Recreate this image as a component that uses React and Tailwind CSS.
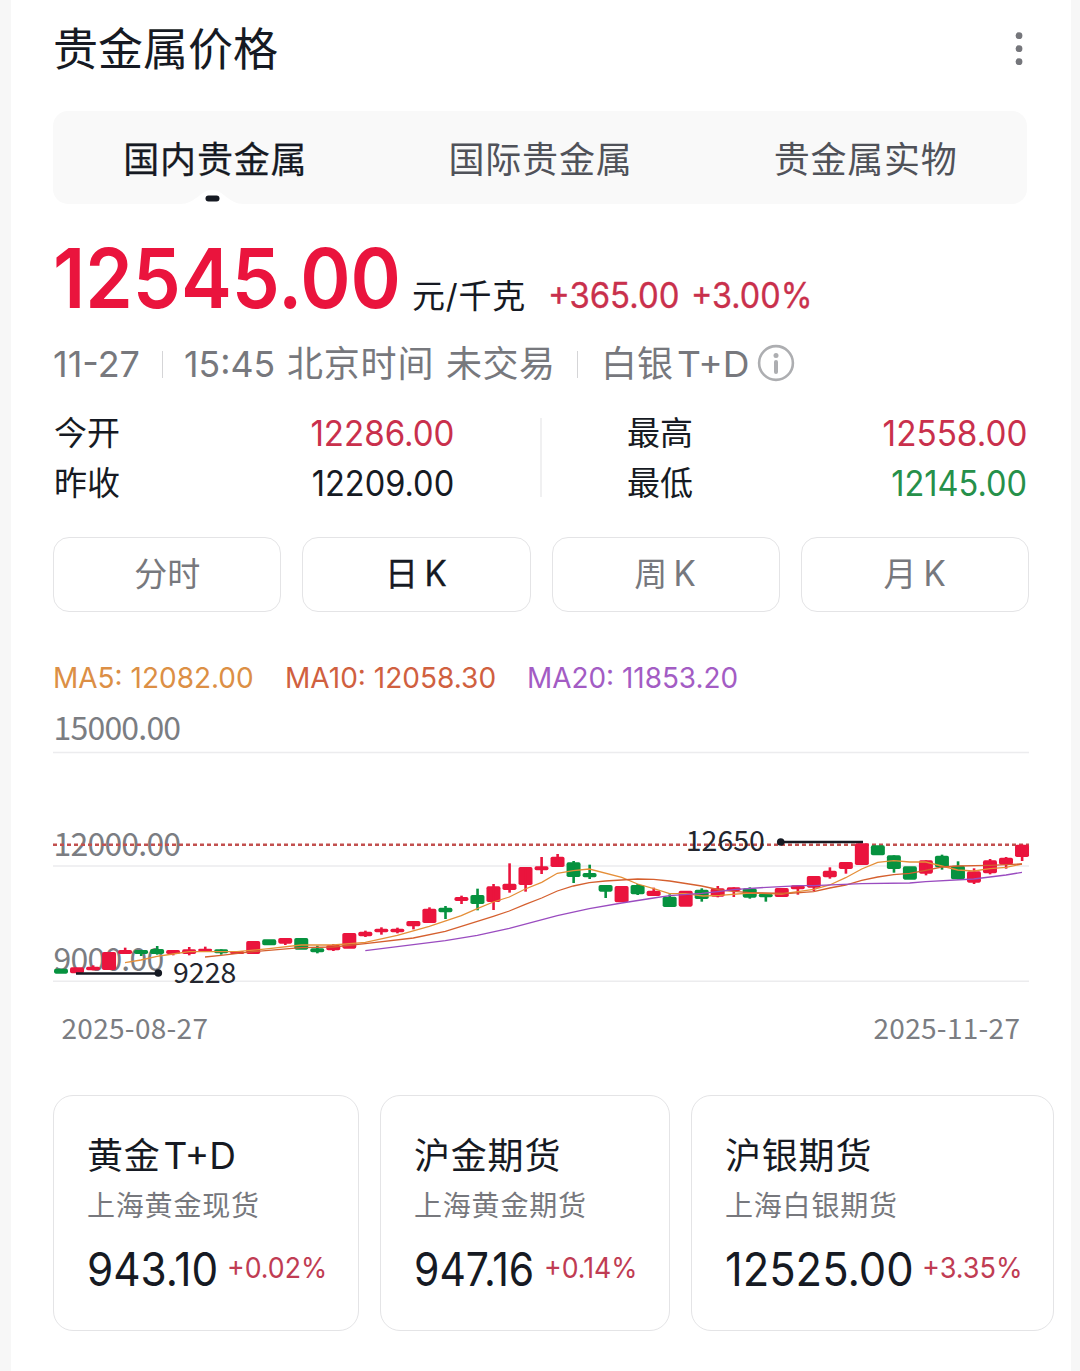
import React from "react";

const candles = [
  ["G", 446, 461], ["R", 442, 460], ["R", 440, 451, 436, 451], ["R", 396, 450], ["R", 390, 402, 383, 402],
  ["G", 390, 402, 390, 408], ["G", 387, 402, 378, 404], ["R", 390, 402, 390, 406], ["R", 388, 402, 381, 406],
  ["R", 386, 394, 380, 396], ["G", 388, 400, 388, 404], ["R", 393, 402], ["R", 363, 402], ["G", 358, 376],
  ["R", 354, 371, 354, 375], ["G", 354, 389], ["G", 385, 397, 377, 400], ["R", 375, 391, 372, 393],
  ["R", 339, 386], ["R", 335, 349, 332, 351], ["R", 326, 337, 322, 344], ["R", 326, 337, 323, 340],
  ["R", 303, 319, 303, 328], ["R", 266, 309, 262, 309], ["G", 263, 277, 258, 297], ["R", 231, 243, 227, 252],
  ["G", 225, 252, 206, 271], ["R", 199, 246, 192, 270], ["R", 191, 210, 130, 218], ["R", 141, 195, 141, 215],
  ["R", 139, 151, 111, 162], ["R", 110, 141, 102, 141], ["G", 127, 171, 123, 189], ["G", 159, 172, 134, 177],
  ["G", 195, 215, 195, 234], ["R", 198, 247], ["G", 195, 223, 192, 225], ["R", 212, 228, 203, 228],
  ["G", 230, 261, 223, 261], ["R", 212, 260], ["G", 209, 237, 205, 245], ["R", 205, 230, 198, 232],
  ["R", 202, 213, 202, 231], ["G", 205, 233, 202, 236], ["G", 221, 232, 221, 245], ["R", 204, 231],
  ["R", 196, 208, 196, 224], ["R", 168, 203, 168, 213], ["R", 152, 172, 142, 176], ["R", 126, 147, 126, 161],
  ["R", 70, 135], ["G", 76, 106], ["G", 106, 147, 106, 158], ["G", 139, 179], ["R", 121, 161, 121, 166],
  ["G", 107, 142, 104, 149], ["G", 137, 178, 124, 178], ["R", 154, 188, 145, 192], ["R", 121, 160, 117, 163],
  ["R", 113, 134, 111, 146], ["R", 74, 111, 74, 123],
];

const ma5 = "125,962.7 141,960 157,956.3 173,954 189,951.7 237,951.7 269,948.7 301,945 333.3,945 365.3,942.3 397.3,935.3 429.3,926.3 461.3,915.7 477.3,908.7 493.3,902 509.3,897 525.3,889 541.7,882.3 557.3,873.3 573.3,870.7 589.3,869 621.7,877.3 637.7,884 653.7,888.7 669.7,893.7 685.7,893.7 703.3,896 720,895.3 750,893 781.7,894 797.7,891.7 813.7,889.3 829.7,885 845.7,877.7 861.7,869 877.7,862.3 893.7,860.7 909.7,862 925.7,862 941.7,866 957.7,870 973.7,871 990,868.7 1006,867.3 1022,864";
const ma10 = "205,957 221,955.3 253,951.7 301,947.7 333.3,947 365.3,943.7 413.3,938 445.3,931.3 461.3,926.3 493.3,916.3 509.3,911 525.3,904.3 541.7,898 557.3,891 573.3,886 589.3,882.7 605.3,881 637.7,879 653.7,879.3 669.7,881 701.7,886 720,890 733.3,891.3 750,892.7 790,893.3 813.7,891.7 829.7,888 845.7,885 861.7,880.3 877.7,877 893.7,874.7 909.7,873.3 925.7,870.3 941.7,867 957.7,866 990,865.3 1022,864";
const ma20 = "365.3,950.7 397.3,946.7 445.3,940.7 477.3,935.3 509.3,928.3 557.3,915.7 589.3,908.7 621.7,903 653.7,898 669.7,895.7 701.7,893.3 720,891.3 733.3,889.7 766.7,887.3 800,885.7 813.7,885.7 861.7,883.7 909.7,883 925.7,881.7 973.7,879 1006,875 1022,872.3";

function Chart() {
  return (
    <svg viewBox="53 700 977 350" className="block h-[350px] w-[977px]" fill="none">
      <path d="M53 752.5H1029M53 866H1029M53 981.3H1029" stroke="#ececee" strokeWidth="1.6" />
      <g className="font-['Noto_Sans_CJK_SC',sans-serif]" fill="#7b7d82" fontSize="32" letterSpacing="-0.8">
        <text x="53.5" y="740.3">15000.00</text>
        <text x="53.5" y="855.8">12000.00</text>
        <text x="53.5" y="970.8">9000.00</text>
      </g>
      <path d="M53 844.7H1029" stroke="#c2504f" strokeWidth="2.6" strokeDasharray="4 3" />
      {candles.map(([kind, top, bottom, high, low], i) => {
        const x = 61 + i * 16.017;
        return (
          <g key={i} fill={kind === "R" ? "#ea143d" : "#06923f"}>
            <rect x={x - 7} y={820 + top / 3} width="14" height={(bottom - top) / 3} rx="1.8" />
            {high !== undefined && <rect x={x - 1.2} y={820 + high / 3} width="2.6" height={(low - high) / 3} />}
          </g>
        );
      })}
      <polyline points={ma5} stroke="#e58f38" strokeWidth="1.3" />
      <polyline points={ma10} stroke="#d5602f" strokeWidth="1.3" />
      <polyline points={ma20} stroke="#9a4cc0" strokeWidth="1.3" />
      <path d="M76 973.5H158M781 842H863" stroke="#161a23" strokeWidth="2.6" />
      <circle cx="158.3" cy="973" r="3.8" fill="#161a23" />
      <circle cx="780.7" cy="842" r="3.8" fill="#161a23" />
      <g className="font-['Noto_Sans_CJK_SC',sans-serif]" fill="#23262e" fontSize="28.5">
        <text x="685.8" y="850.6">12650</text>
        <text x="173" y="982.8">9228</text>
      </g>
      <g className="font-['Noto_Sans_CJK_SC',sans-serif]" fill="#7b7d82" fontSize="28" letterSpacing="0.3">
        <text x="61.5" y="1039.2">2025-08-27</text>
        <text x="873.5" y="1039.2">2025-11-27</text>
      </g>
    </svg>
  );
}

function InfoIcon() {
  return (
    <svg viewBox="0 0 38 38" className="mb-[2px] ml-[9px] h-[38px] w-[38px]" fill="none">
      <circle cx="19" cy="19" r="16.9" stroke="#adaeb1" strokeWidth="2.6" />
      <circle cx="19" cy="11.4" r="2.5" fill="#adaeb1" />
      <path d="M19 18v10" stroke="#adaeb1" strokeWidth="4" strokeLinecap="round" />
    </svg>
  );
}

const periods = [
  { cjk: "分时", latin: "" },
  { cjk: "日", latin: "K", active: true },
  { cjk: "周", latin: "K" },
  { cjk: "月", latin: "K" },
];

const quotes = [
  { name: "黄金", suffix: "T+D", sub: "上海黄金现货", price: "943.10", pct: "+0.02%", box: "w-[306px]", priceBox: "w-[140px]", priceScale: "scale-x-[0.92]", pctScale: "scale-x-[0.92]" },
  { name: "沪金期货", sub: "上海黄金期货", price: "947.16", pct: "+0.14%", box: "w-[290px]", priceBox: "w-[130px]", priceScale: "scale-x-[0.89]", pctScale: "scale-x-[0.92]" },
  { name: "沪银期货", sub: "上海白银期货", price: "12525.00", pct: "+3.35%", box: "w-[363px]", priceBox: "w-[197px]", priceScale: "scale-x-[0.945]", pctScale: "scale-x-[0.935]" },
];

export default function App() {
  return (
    <div className="h-[1371px] w-[1080px] overflow-hidden bg-[#f7f7f7] pl-[11px] font-['Inter','Noto_Sans_CJK_SC',sans-serif] text-[#161a23]">
      <div className="h-full w-[1060px] bg-white pl-[42px]">
        <header className="flex h-[111px] w-[974px] items-start justify-between pt-[18px]">
          <h1 className="text-[45px] leading-[64px]">贵金属价格</h1>
          <svg viewBox="0 0 16 40" className="mt-[11px] h-10 w-4" fill="#75767b">
            <circle cx="8" cy="6.7" r="3.4" />
            <circle cx="8" cy="19.7" r="3.4" />
            <circle cx="8" cy="32.7" r="3.4" />
          </svg>
        </header>

        <nav className="relative grid h-[93px] w-[974px] grid-cols-3 rounded-[15px] bg-[#f9f9f9] text-center text-[36px] leading-[98px] tracking-[0.8px] text-[#505259]">
          <span className="text-[#161a23] [-webkit-text-stroke:0.25px_#161a23]">国内贵金属</span>
          <span className="pl-px">国际贵金属</span>
          <span className="pl-[2px]">贵金属实物</span>
          <svg viewBox="0 0 64 14" className="absolute bottom-0 left-[127px] h-[14px] w-16">
            <path d="M0 14C16 14 20 0 32 0S48 14 64 14Z" fill="#fff" />
            <rect x="25.5" y="5.5" width="14" height="6" rx="3" fill="#161a23" />
          </svg>
        </nav>

        <div className="flex h-[112px] items-baseline whitespace-nowrap pt-[24px]">
          <span className="w-[359px] origin-left scale-x-[0.92] text-[83px] leading-[100px] font-semibold text-[#ea143d]">12545.00</span>
          <span className="w-[136px] text-[33px] tracking-[0.8px]">元/千克</span>
          <span className="w-[143px] origin-left scale-x-[0.94] text-[35px] text-[#c9304c] [-webkit-text-stroke:0.3px_#c9304c]">+365.00</span>
          <span className="origin-left scale-x-[0.925] text-[35px] text-[#c9304c] [-webkit-text-stroke:0.3px_#c9304c]">+3.00%</span>
        </div>

        <div className="flex h-[92px] items-center whitespace-nowrap pt-[4px] text-[36px] text-[#77787d]">
          <span className="w-[109px]">11-27</span>
          <i className="h-[27px] w-px bg-[#d5d5d7]" />
          <span className="ml-[21px] w-[103px] origin-left scale-x-[0.99]">15:45</span>
          <span className="w-[159px] tracking-[0.8px]">北京时间</span>
          <span className="w-[131px] tracking-[0.5px]">未交易</span>
          <i className="h-[27px] w-px bg-[#d5d5d7]" />
          <span className="ml-[23px] w-[76px]">白银</span>
          <span className="w-[71px] origin-left scale-x-[1.03]">T+D</span>
          <InfoIcon />
        </div>

        <section className="flex h-[129px] w-[974px] items-start text-[33px] leading-[50px]">
          <div className="w-[401px]">
            <p className="flex justify-between">
              <span className="pl-px">今开</span>
              <span className="origin-right scale-x-[0.945] text-[35px] text-[#c9304c]">12286.00</span>
            </p>
            <p className="flex justify-between">
              <span className="pl-px">昨收</span>
              <span className="origin-right scale-x-[0.93] text-[35px]">12209.00</span>
            </p>
          </div>
          <i className="mt-[10px] ml-[86px] h-[79px] w-[2px] bg-[#f0f0f1]" />
          <div className="ml-[85px] grow">
            <p className="flex justify-between">
              <span>最高</span>
              <span className="origin-right scale-x-[0.95] text-[35px] text-[#c9304c]">12558.00</span>
            </p>
            <p className="flex justify-between">
              <span>最低</span>
              <span className="origin-right scale-x-[0.93] text-[35px] text-[#26904a]">12145.00</span>
            </p>
          </div>
        </section>

        <div className="grid h-[75px] w-[976px] grid-cols-4 gap-[21px] text-center text-[33px] leading-[73px] text-[#77787d]">
          {periods.map((p) => (
            <div
              key={p.cjk}
              className={`h-[75px] rounded-[16px] border border-[#e4e4e6] ${p.active ? "text-[#161a23] [-webkit-text-stroke:0.3px_#161a23]" : ""}`}
            >
              {p.cjk}
              {p.latin && <span className="ml-[6px] inline-block scale-x-[0.95] text-[35px] leading-[70px]">{p.latin}</span>}
            </div>
          ))}
        </div>

        <div className="flex h-[88px] pt-[43px] text-[29px] leading-[46px] whitespace-nowrap">
          <span className="w-[232px] origin-left scale-x-[0.965] text-[#dc8f45]">MA5: 12082.00</span>
          <span className="w-[242px] origin-left scale-x-[0.967] text-[#d0603f]">MA10: 12058.30</span>
          <span className="origin-left scale-x-[0.962] text-[#a35cc4]">MA20: 11853.20</span>
        </div>

        <Chart />

        <div className="mt-[45px] flex h-[236px] gap-[21px]">
          {quotes.map((q) => (
            <article key={q.sub} className={`${q.box} shrink-0 rounded-[20px] border border-[#e4e4e6] pt-[34px] pl-[33px] whitespace-nowrap`}>
              <h2 className="text-[36px] leading-[52px] tracking-[0.8px]">
                {q.name}
                {q.suffix && <span className="ml-[3px] text-[37px] tracking-normal">{q.suffix}</span>}
              </h2>
              <p className="text-[28px] leading-[48px] tracking-[0.8px] text-[#77787d]">{q.sub}</p>
              <p className="flex pt-[7px] leading-[64px]">
                <span className={`${q.priceBox} ${q.priceScale} origin-left text-[46px]`}>{q.price}</span>
                <span className={`${q.pctScale} origin-left text-[29px] leading-[61px] text-[#c03c53]`}>{q.pct}</span>
              </p>
            </article>
          ))}
        </div>
      </div>
    </div>
  );
}
